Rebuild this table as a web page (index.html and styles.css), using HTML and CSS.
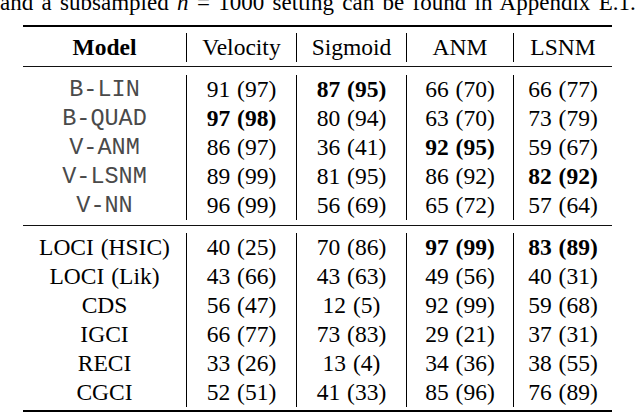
FILE: index.html
```html
<!DOCTYPE html>
<html lang="en">
<head>
<meta charset="UTF-8">
<title>Results table</title>
<link rel="stylesheet" href="styles.css">
</head>
<body>
<!-- last line of the paragraph above the table -->
<p class="lead">and a subsampled <i>n</i> = 1000 setting can be found in Appendix E.1.</p>

<div class="results">
  <div class="rule heavy"></div>
  <div class="sep top"></div>
  <div class="row head">
    <div class="cell name">Model</div>
    <div class="cell">Velocity</div>
    <div class="cell">Sigmoid</div>
    <div class="cell">ANM</div>
    <div class="cell">LSNM</div>
  </div>
  <div class="sep after-head"></div>
  <div class="rule"></div>
  <div class="sep below"></div>

  <!-- baselines -->
  <div class="row">
    <div class="cell name mono">B-LIN</div>
    <div class="cell">91 (97)</div>
    <div class="cell best">87 (95)</div>
    <div class="cell">66 (70)</div>
    <div class="cell">66 (77)</div>
  </div>
  <div class="row">
    <div class="cell name mono">B-QUAD</div>
    <div class="cell best">97 (98)</div>
    <div class="cell">80 (94)</div>
    <div class="cell">63 (70)</div>
    <div class="cell">73 (79)</div>
  </div>
  <div class="row">
    <div class="cell name mono">V-ANM</div>
    <div class="cell">86 (97)</div>
    <div class="cell">36 (41)</div>
    <div class="cell best">92 (95)</div>
    <div class="cell">59 (67)</div>
  </div>
  <div class="row">
    <div class="cell name mono">V-LSNM</div>
    <div class="cell">89 (99)</div>
    <div class="cell">81 (95)</div>
    <div class="cell">86 (92)</div>
    <div class="cell best">82 (92)</div>
  </div>
  <div class="row">
    <div class="cell name mono">V-NN</div>
    <div class="cell">96 (99)</div>
    <div class="cell">56 (69)</div>
    <div class="cell">65 (72)</div>
    <div class="cell">57 (64)</div>
  </div>

  <div class="sep above"></div>
  <div class="rule"></div>
  <div class="sep below2"></div>

  <!-- other methods -->
  <div class="row">
    <div class="cell name">LOCI (HSIC)</div>
    <div class="cell">40 (25)</div>
    <div class="cell">70 (86)</div>
    <div class="cell best">97 (99)</div>
    <div class="cell best">83 (89)</div>
  </div>
  <div class="row">
    <div class="cell name">LOCI (Lik)</div>
    <div class="cell">43 (66)</div>
    <div class="cell">43 (63)</div>
    <div class="cell">49 (56)</div>
    <div class="cell">40 (31)</div>
  </div>
  <div class="row">
    <div class="cell name">CDS</div>
    <div class="cell">56 (47)</div>
    <div class="cell">12 (5)</div>
    <div class="cell">92 (99)</div>
    <div class="cell">59 (68)</div>
  </div>
  <div class="row">
    <div class="cell name">IGCI</div>
    <div class="cell">66 (77)</div>
    <div class="cell">73 (83)</div>
    <div class="cell">29 (21)</div>
    <div class="cell">37 (31)</div>
  </div>
  <div class="row">
    <div class="cell name">RECI</div>
    <div class="cell">33 (26)</div>
    <div class="cell">13 (4)</div>
    <div class="cell">34 (36)</div>
    <div class="cell">38 (55)</div>
  </div>
  <div class="row">
    <div class="cell name">CGCI</div>
    <div class="cell">52 (51)</div>
    <div class="cell">41 (33)</div>
    <div class="cell">85 (96)</div>
    <div class="cell">76 (89)</div>
  </div>
  <div class="sep last"></div>
  <div class="rule heavy"></div>
</div>
</body>
</html>
```

FILE: styles.css
```css
/* page: a cropped piece of a paper, white background */
html, body {
    margin: 0;
    padding: 0;
    background: #fff;
    color: #000;
    font-family: "Liberation Serif", Tinos, "Times New Roman", "DejaVu Serif", serif;
    font-size: 23.5px;
    overflow: hidden;
}

/* paragraph line cut off by the top edge */
.lead {
    margin: -9px 0 0 0;
    font-size: 23px;
    line-height: 23px;
    height: 23px;
    white-space: nowrap;
    word-spacing: 2.6px;
}

/* table block: top rule sits at y = 25 */
.results {
    margin: 11px 0 0 23px;
    width: 589px;
}

.rule {
    height: 1px;
    background: #111;
}

.rule.heavy {
    height: 2px;
    background: #000;
}

/* spacing around the booktabs rules */
.sep.top { height: 6px; }
.sep.after-head { height: 4px; }
.sep.below { height: 8px; }
.sep.above { height: 5px; }
.sep.below2 { height: 7px; }
.sep.last { height: 3px; }

.row {
    display: grid;
    grid-template-columns: 163px 110px 110px 107px 99px;
    height: 29px;
}

.cell {
    text-align: center;
    line-height: 29px;
    white-space: nowrap;
    word-spacing: 1px;
    border-left: 1px solid #000;
}

.cell.name {
    border-left: none;
}

.head .cell.name {
    font-weight: bold;
}

.mono {
    font-family: "Liberation Mono", "Courier New", monospace;
    color: #4a4a4a;
    word-spacing: 0;
}

.best {
    font-weight: bold;
}
```
